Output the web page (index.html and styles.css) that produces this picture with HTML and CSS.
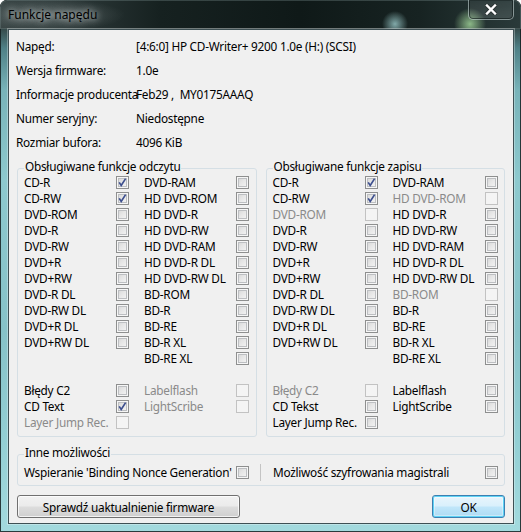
FILE: index.html
```html
<!DOCTYPE html>
<html lang="pl">
<head>
<meta charset="utf-8">
<title>Funkcje napędu</title>
<link rel="stylesheet" href="styles.css">
</head>
<body>
<div class="window">
  <div class="titlebar">
    <span class="title">Funkcje napędu</span>
    <div class="close">
      <svg width="12" height="11" viewBox="0 0 12 11"><path d="M2 1.5 L10 9.5 M10 1.5 L2 9.5" stroke="#2b3333" stroke-width="4.2" stroke-linecap="round"/><path d="M2 1.5 L10 9.5 M10 1.5 L2 9.5" stroke="#ffffff" stroke-width="2.4" stroke-linecap="square"/></svg>
    </div>
  </div>
  <div class="client">
    <div class="info">
      <div class="info-row"><span class="info-label">Napęd:</span><span>[4:6:0] HP CD-Writer+ 9200 1.0e (H:) (SCSI)</span></div>
      <div class="info-row"><span class="info-label">Wersja firmware:</span><span>1.0e</span></div>
      <div class="info-row"><span class="info-label">Informacje producenta</span><span>Feb29 ,&nbsp; MY0175AAAQ</span></div>
      <div class="info-row"><span class="info-label">Numer seryjny:</span><span>Niedostępne</span></div>
      <div class="info-row"><span class="info-label">Rozmiar bufora:</span><span>4096 KiB</span></div>
    </div>

    <div class="groups">
      <div class="group">
        <span class="group-title">Obsługiwane funkcje odczytu</span>
        <div class="caps">
          <span class="lbl">CD-R</span><span class="cb"><svg class="tick" width="11" height="11" viewBox="0 0 11 11"><path d="M2.2 5.4 L4.2 8.4 L8.6 1.6" fill="none" stroke="#3d4f8e" stroke-width="1.7"/></svg></span><span class="lbl">DVD-RAM</span><span class="cb"></span>
          <span class="lbl">CD-RW</span><span class="cb"><svg class="tick" width="11" height="11" viewBox="0 0 11 11"><path d="M2.2 5.4 L4.2 8.4 L8.6 1.6" fill="none" stroke="#3d4f8e" stroke-width="1.7"/></svg></span><span class="lbl">HD DVD-ROM</span><span class="cb"></span>
          <span class="lbl">DVD-ROM</span><span class="cb"></span><span class="lbl">HD DVD-R</span><span class="cb"></span>
          <span class="lbl">DVD-R</span><span class="cb"></span><span class="lbl">HD DVD-RW</span><span class="cb"></span>
          <span class="lbl">DVD-RW</span><span class="cb"></span><span class="lbl">HD DVD-RAM</span><span class="cb"></span>
          <span class="lbl">DVD+R</span><span class="cb"></span><span class="lbl">HD DVD-R DL</span><span class="cb"></span>
          <span class="lbl">DVD+RW</span><span class="cb"></span><span class="lbl">HD DVD-RW DL</span><span class="cb"></span>
          <span class="lbl">DVD-R DL</span><span class="cb"></span><span class="lbl">BD-ROM</span><span class="cb"></span>
          <span class="lbl">DVD-RW DL</span><span class="cb"></span><span class="lbl">BD-R</span><span class="cb"></span>
          <span class="lbl">DVD+R DL</span><span class="cb"></span><span class="lbl">BD-RE</span><span class="cb"></span>
          <span class="lbl">DVD+RW DL</span><span class="cb"></span><span class="lbl">BD-R XL</span><span class="cb"></span>
          <span></span><span></span><span class="lbl">BD-RE XL</span><span class="cb"></span>
          <span class="blank"></span>
          <span class="lbl">Błędy C2</span><span class="cb"></span><span class="lbl dis">Labelflash</span><span class="cb dis"></span>
          <span class="lbl">CD Text</span><span class="cb"><svg class="tick" width="11" height="11" viewBox="0 0 11 11"><path d="M2.2 5.4 L4.2 8.4 L8.6 1.6" fill="none" stroke="#3d4f8e" stroke-width="1.7"/></svg></span><span class="lbl dis">LightScribe</span><span class="cb dis"></span>
          <span class="lbl dis">Layer Jump Rec.</span><span class="cb dis"></span><span></span><span></span>
        </div>
      </div>

      <div class="group">
        <span class="group-title">Obsługiwane funkcje zapisu</span>
        <div class="caps">
          <span class="lbl">CD-R</span><span class="cb"><svg class="tick" width="11" height="11" viewBox="0 0 11 11"><path d="M2.2 5.4 L4.2 8.4 L8.6 1.6" fill="none" stroke="#3d4f8e" stroke-width="1.7"/></svg></span><span class="lbl">DVD-RAM</span><span class="cb"></span>
          <span class="lbl">CD-RW</span><span class="cb"><svg class="tick" width="11" height="11" viewBox="0 0 11 11"><path d="M2.2 5.4 L4.2 8.4 L8.6 1.6" fill="none" stroke="#3d4f8e" stroke-width="1.7"/></svg></span><span class="lbl dis">HD DVD-ROM</span><span class="cb dis"></span>
          <span class="lbl dis">DVD-ROM</span><span class="cb dis"></span><span class="lbl">HD DVD-R</span><span class="cb"></span>
          <span class="lbl">DVD-R</span><span class="cb"></span><span class="lbl">HD DVD-RW</span><span class="cb"></span>
          <span class="lbl">DVD-RW</span><span class="cb"></span><span class="lbl">HD DVD-RAM</span><span class="cb"></span>
          <span class="lbl">DVD+R</span><span class="cb"></span><span class="lbl">HD DVD-R DL</span><span class="cb"></span>
          <span class="lbl">DVD+RW</span><span class="cb"></span><span class="lbl">HD DVD-RW DL</span><span class="cb"></span>
          <span class="lbl">DVD-R DL</span><span class="cb"></span><span class="lbl dis">BD-ROM</span><span class="cb dis"></span>
          <span class="lbl">DVD-RW DL</span><span class="cb"></span><span class="lbl">BD-R</span><span class="cb"></span>
          <span class="lbl">DVD+R DL</span><span class="cb"></span><span class="lbl">BD-RE</span><span class="cb"></span>
          <span class="lbl">DVD+RW DL</span><span class="cb"></span><span class="lbl">BD-R XL</span><span class="cb"></span>
          <span></span><span></span><span class="lbl">BD-RE XL</span><span class="cb"></span>
          <span class="blank"></span>
          <span class="lbl dis">Błędy C2</span><span class="cb dis"></span><span class="lbl">Labelflash</span><span class="cb"></span>
          <span class="lbl">CD Tekst</span><span class="cb"></span><span class="lbl">LightScribe</span><span class="cb"></span>
          <span class="lbl">Layer Jump Rec.</span><span class="cb"></span><span></span><span></span>
        </div>
      </div>
    </div>

    <div class="group other">
      <span class="group-title">Inne możliwości</span>
      <div class="other-row">
        <span class="other-label">Wspieranie 'Binding Nonce Generation'</span>
        <span class="cb"></span>
        <span class="sep"></span>
        <span class="other-label2">Możliwość szyfrowania magistrali</span>
        <span class="cb"></span>
      </div>
    </div>

    <div class="buttons">
      <button class="btn btn-update">Sprawdź uaktualnienie firmware</button>
      <button class="btn btn-ok">OK</button>
    </div>
  </div>
</div>
</body>
</html>
```

FILE: styles.css
```css
html, body {
  margin: 0;
  padding: 0;
  background: #ffffff;
}

body {
  font-family: "Noto Sans", "Open Sans", "DejaVu Sans", sans-serif;
  font-size: 11.8px;
  letter-spacing: -0.25px;
  color: #000;
}

.window {
  width: 521px;
  height: 532px;
  box-sizing: border-box;
  border-radius: 7px 7px 0 0;
  overflow: hidden;
  display: flex;
  flex-direction: column;
  background:
    linear-gradient(to bottom, #263434 0px, #344848 28px, #4f8086 48px, #78b3b9 90px, #8dc9ce 180px, #86c2c8 330px, #93cfd4 440px, #a3dade 100%);
  box-shadow: inset 0 0 0 1px rgba(20, 30, 32, 0.85);
}

.titlebar {
  height: 29px;
  flex: none;
  display: flex;
  justify-content: space-between;
  align-items: flex-start;
  padding-left: 8px;
  background:
    radial-gradient(circle 13px at 395px 24px, rgba(165, 215, 215, 0.75), rgba(165, 215, 215, 0) 100%),
    radial-gradient(circle 16px at 470px 24px, rgba(175, 230, 165, 0.75), rgba(175, 230, 165, 0) 100%),
    radial-gradient(ellipse 75px 16px at 50px 15px, rgba(120, 130, 130, 0.55), rgba(120, 130, 130, 0) 100%),
    linear-gradient(to right, #3a4646 0px, #2a3636 80px, #162120 160px, #0f1918 300px, #172322 420px, #2a3a3a 100%);
  border-radius: 7px 7px 0 0;
  box-shadow: inset 0 0 0 1px rgba(120, 140, 140, 0.35);
}

.title {
  font-size: 12px;
  line-height: 30px;
  color: #000;
  letter-spacing: 0;
  text-shadow: 0 0 6px rgba(230, 235, 235, 0.8), 0 0 10px rgba(220, 230, 230, 0.6);
}

.close {
  width: 46px;
  height: 20px;
  box-sizing: border-box;
  margin-right: 7px;
  border: 1px solid rgba(200, 215, 215, 0.55);
  border-top: none;
  border-radius: 0 0 5px 5px;
  box-shadow: inset 0 0 0 1px rgba(10, 20, 20, 0.6);
  background: linear-gradient(to bottom, rgba(255, 255, 255, 0.06), rgba(255, 255, 255, 0.12));
  display: flex;
  align-items: center;
  justify-content: center;
}

.client {
  margin: 0 7px 0 8px;
  background: #f0f0f0;
  border: 1px solid #3e5054;
  box-shadow: 0 0 0 1px rgba(255, 255, 255, 0.3);
  padding: 4px 8px 5px 8px;
  display: flex;
  flex-direction: column;
}

.info {
  margin-left: -1px;
}

.info-row {
  display: grid;
  grid-template-columns: 120px 1fr;
  height: 24px;
  line-height: 24px;
  white-space: nowrap;
}

.info-label {
  white-space: nowrap;
}

.groups {
  display: flex;
  gap: 9px;
  margin-top: 14px;
}

.group {
  flex: 1;
  position: relative;
  border: 1px solid #d5dfe5;
  border-radius: 3px;
  padding: 5px 6px 6px 6px;
}

.group-title {
  position: absolute;
  top: -11px;
  left: 6px;
  line-height: 16px;
  padding: 0 1px;
  background: #f0f0f0;
  white-space: nowrap;
}

.caps {
  display: grid;
  grid-template-columns: 92px 28px 92px 13px;
  grid-auto-rows: 16px;
  align-items: center;
}

.lbl {
  line-height: 16px;
  white-space: nowrap;
}

.lbl.dis {
  color: #8a8a8a;
}

.blank {
  grid-column: 1 / -1;
}

.cb {
  width: 13px;
  height: 13px;
  box-sizing: border-box;
  border: 1px solid #8e8f8f;
  background: linear-gradient(135deg, #d2d2d2 0%, #e6e6e6 45%, #f7f7f7 100%);
  box-shadow: inset 0 0 0 1px #f6f6f6, inset 0 0 0 2px #bdbfc2;
  display: block;
  position: relative;
}

.cb.dis {
  border-color: #c2c2c2;
  background: #f4f4f4;
  box-shadow: none;
}

.tick {
  display: block;
}

.other {
  flex: none;
  margin-top: 17px;
  padding: 9px 6px 5px 6px;
}

.other-row {
  display: flex;
  align-items: center;
  height: 16px;
  line-height: 16px;
  white-space: nowrap;
}

.other-label {
  width: 212px;
  flex: none;
}

.sep {
  width: 1px;
  height: 17px;
  background: #c4c4c4;
  margin: 0 12px 0 11px;
}

.other-label2 {
  flex: 1;
}

.buttons {
  display: flex;
  justify-content: space-between;
  margin-top: 9px;
}

.btn {
  height: 23px;
  box-sizing: border-box;
  border: 1px solid #707070;
  border-radius: 3px;
  background: linear-gradient(to bottom, #f2f2f2 0%, #ebebeb 48%, #dddddd 52%, #cfcfcf 100%);
  box-shadow: inset 0 0 0 1px rgba(255, 255, 255, 0.75);
  font-family: inherit;
  font-size: 11.8px;
  letter-spacing: -0.25px;
  color: #000;
  padding: 0;
  line-height: 20px;
}

.btn-update {
  width: 223px;
}

.btn-ok {
  width: 73px;
  border-color: #3c7fb1;
  background: linear-gradient(to bottom, #e9f5fc 0%, #d9f0fc 48%, #c0e6fa 52%, #aedbf3 100%);
  box-shadow: inset 0 0 0 1px #5fd3f5, inset 0 0 0 2px rgba(255, 255, 255, 0.35);
}
```
